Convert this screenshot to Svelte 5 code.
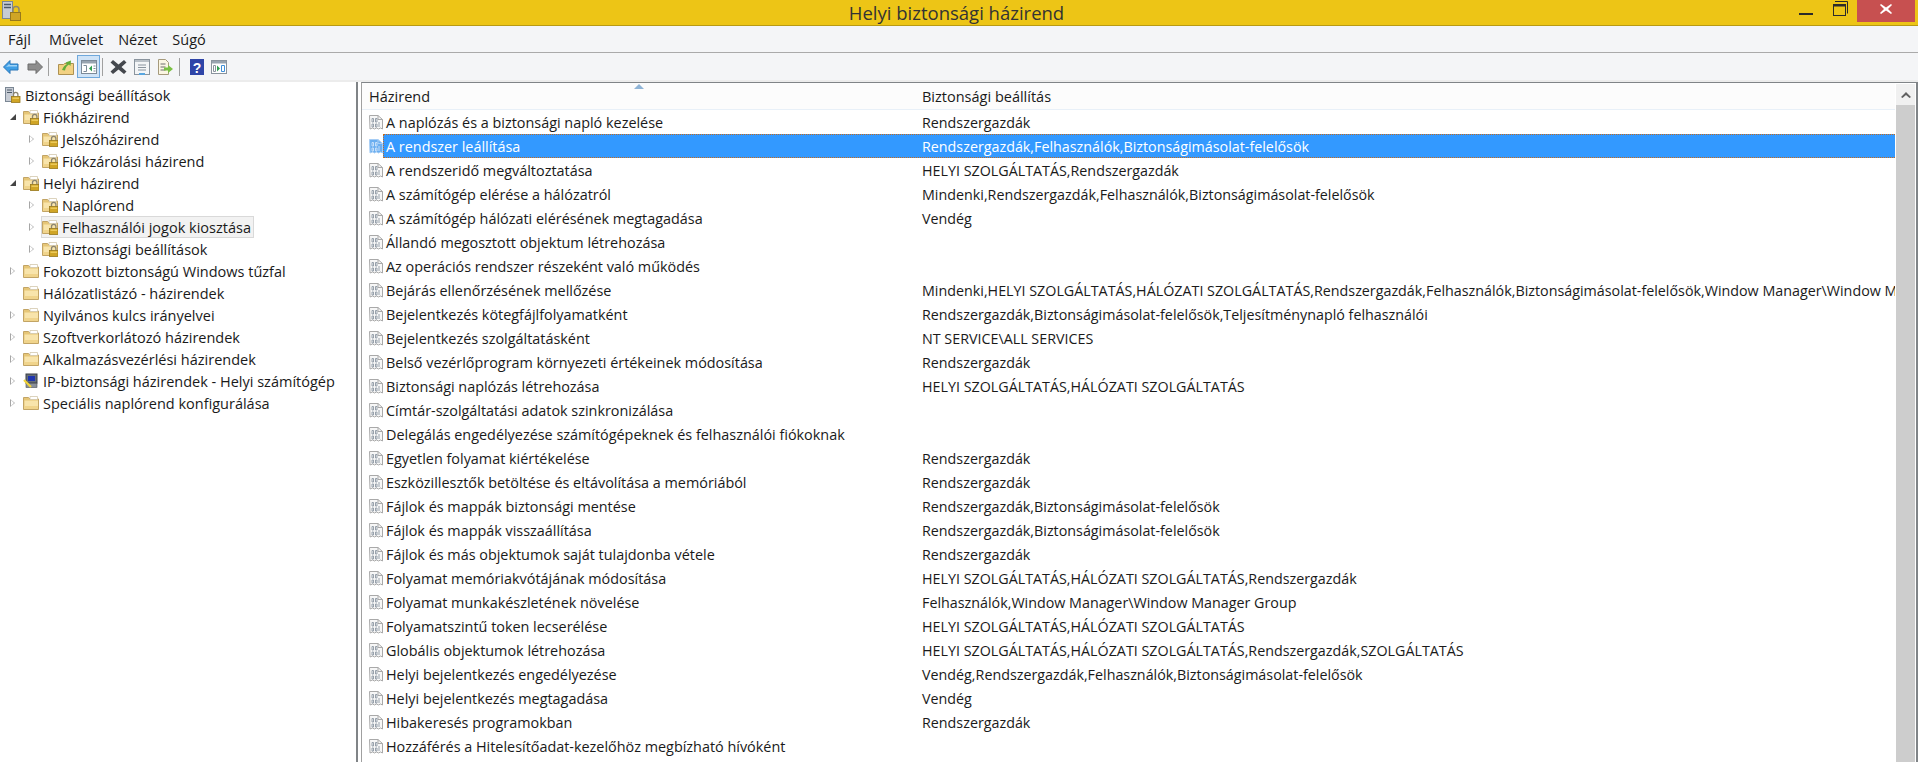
<script>
	const tree = [
		{ label: 'Biztonsági beállítások', icon: 'root', arrow: '', indent: 0 },
		{ label: 'Fiókházirend', icon: 'lock', arrow: 'open', indent: 1 },
		{ label: 'Jelszóházirend', icon: 'lock', arrow: 'closed', indent: 2 },
		{ label: 'Fiókzárolási házirend', icon: 'lock', arrow: 'closed', indent: 2 },
		{ label: 'Helyi házirend', icon: 'lock', arrow: 'open', indent: 1 },
		{ label: 'Naplórend', icon: 'lock', arrow: 'closed', indent: 2 },
		{ label: 'Felhasználói jogok kiosztása', icon: 'lock', arrow: 'closed', indent: 2, current: true },
		{ label: 'Biztonsági beállítások', icon: 'lock', arrow: 'closed', indent: 2 },
		{ label: 'Fokozott biztonságú Windows tűzfal', icon: 'folder', arrow: 'closed', indent: 1 },
		{ label: 'Hálózatlistázó - házirendek', icon: 'folder', arrow: '', indent: 1 },
		{ label: 'Nyilvános kulcs irányelvei', icon: 'folder', arrow: 'closed', indent: 1 },
		{ label: 'Szoftverkorlátozó házirendek', icon: 'folder', arrow: 'closed', indent: 1 },
		{ label: 'Alkalmazásvezérlési házirendek', icon: 'folder', arrow: 'closed', indent: 1 },
		{ label: 'IP-biztonsági házirendek - Helyi számítógép', icon: 'ip', arrow: 'closed', indent: 1 },
		{ label: 'Speciális naplórend konfigurálása', icon: 'folder', arrow: 'closed', indent: 1 }
	];

	const HSZ = 'HELYI SZOLGÁLTATÁS';
	const HAL = 'HÁLÓZATI SZOLGÁLTATÁS';
	const rows = [
		['A naplózás és a biztonsági napló kezelése', 'Rendszergazdák'],
		['A rendszer leállítása', 'Rendszergazdák,Felhasználók,Biztonságimásolat-felelősök'],
		['A rendszeridő megváltoztatása', `${HSZ},Rendszergazdák`],
		['A számítógép elérése a hálózatról', 'Mindenki,Rendszergazdák,Felhasználók,Biztonságimásolat-felelősök'],
		['A számítógép hálózati elérésének megtagadása', 'Vendég'],
		['Állandó megosztott objektum létrehozása', ''],
		['Az operációs rendszer részeként való működés', ''],
		['Bejárás ellenőrzésének mellőzése', `Mindenki,${HSZ},${HAL},Rendszergazdák,Felhasználók,Biztonságimásolat-felelősök,Window Manager\\Window Manager Group`],
		['Bejelentkezés kötegfájlfolyamatként', 'Rendszergazdák,Biztonságimásolat-felelősök,Teljesítménynapló felhasználói'],
		['Bejelentkezés szolgáltatásként', 'NT SERVICE\\ALL SERVICES'],
		['Belső vezérlőprogram környezeti értékeinek módosítása', 'Rendszergazdák'],
		['Biztonsági naplózás létrehozása', `${HSZ},${HAL}`],
		['Címtár-szolgáltatási adatok szinkronizálása', ''],
		['Delegálás engedélyezése számítógépeknek és felhasználói fiókoknak', ''],
		['Egyetlen folyamat kiértékelése', 'Rendszergazdák'],
		['Eszközillesztők betöltése és eltávolítása a memóriából', 'Rendszergazdák'],
		['Fájlok és mappák biztonsági mentése', 'Rendszergazdák,Biztonságimásolat-felelősök'],
		['Fájlok és mappák visszaállítása', 'Rendszergazdák,Biztonságimásolat-felelősök'],
		['Fájlok és más objektumok saját tulajdonba vétele', 'Rendszergazdák'],
		['Folyamat memóriakvótájának módosítása', `${HSZ},${HAL},Rendszergazdák`],
		['Folyamat munkakészletének növelése', 'Felhasználók,Window Manager\\Window Manager Group'],
		['Folyamatszintű token lecserélése', `${HSZ},${HAL}`],
		['Globális objektumok létrehozása', `${HSZ},${HAL},Rendszergazdák,SZOLGÁLTATÁS`],
		['Helyi bejelentkezés engedélyezése', 'Vendég,Rendszergazdák,Felhasználók,Biztonságimásolat-felelősök'],
		['Helyi bejelentkezés megtagadása', 'Vendég'],
		['Hibakeresés programokban', 'Rendszergazdák'],
		['Hozzáférés a Hitelesítőadat-kezelőhöz megbízható hívóként', '']
	];
</script>

{#snippet padlock(x, y)}
	<path d="M{x + 2} {y + 4}V{y + 2}a2.200 2.200 0 0 1 4.400 0v2" fill="none" stroke="#8c8672" stroke-width="1.300" />
	<rect x={x} y={y + 4} width="8.500" height="6" fill="#d0a526" stroke="#97781c" stroke-width=".8" />
	<rect x={x + 1} y={y + 5} width="6.500" height="1.500" fill="#ecca5a" />
{/snippet}

{#snippet folder(locked)}
	<svg class="ico" viewBox="0 0 16 16">
		<path d="M.5 2.500h5l1.500 1.500h8.500v10.500H.5z" fill="#e6c677" stroke="#c2a465" />
		<path d="M7 1.500h7.500v3H7z" fill="#fff" stroke="#d3c8ac" stroke-width=".8" />
		<path d="M1.500 5.500h13.500v8.500H1.500z" fill="#f8e4ab" />
		<path d="M1.500 11h13.500v3H1.500z" fill="#f0d48c" />
		{#if locked}{@render padlock(7.500, 5.500)}{/if}
	</svg>
{/snippet}

{#snippet policy(sel)}
	{@const line = sel ? '#a6cdf5' : '#a9a9a9'}
	{@const digit = sel ? '#cfe4fb' : '#8d97a3'}
	<svg class="pol" viewBox="0 0 14 15">
		<path d="M.5.500h8.500l4.500 4v9.500l-2-1-2 1-2-1-2 1-2-1-2.500 1z" fill={sel ? '#6aaef0' : '#f7f7f7'} stroke={line} />
		<path d="M9 .5v4h4.500" fill="none" stroke={line} />
		<path d="M3 3.500h1.500v3.500H3zM6.500 3.500H8v3.500H6.500zM3 9h1.500v3H3zM6.500 9H8v3H6.500zM10 7v5" fill="none" stroke={digit} stroke-width=".9" />
	</svg>
{/snippet}

<div class="win">
	<header class="title">
		<svg class="appicon" viewBox="0 0 19 22">
			<rect x=".5" y=".5" width="10" height="17" fill="#c7ccd4" stroke="#7b8794" />
			<path d="M2 3.500h7M2 6.500h7" stroke="#4d5a68" stroke-width="1.500" />
			<path d="M11 11V8.500a3 3 0 0 1 6 0V11" fill="none" stroke="#8c8672" stroke-width="1.500" />
			<rect x="8.500" y="11.500" width="10" height="8" fill="#d0a526" stroke="#97781c" />
		</svg>
		<span class="ttext">Helyi biztonsági házirend</span>
		<svg class="min" viewBox="0 0 14 2"><rect width="14" height="2" fill="#2b2b2b" /></svg>
		<svg class="max" viewBox="0 0 15 15">
			<path d="M2 .5h12.500v12" fill="none" stroke="#2b2b2b" />
			<rect x=".5" y="3.500" width="12" height="11" fill="none" stroke="#2b2b2b" />
			<rect y="3" width="13" height="2.500" fill="#2b2b2b" />
		</svg>
		<div class="close">
			<svg viewBox="0 0 12 10"><path d="M1 0l5 3.500L11 0l1 1-4 4 4 4-1 1-5-3.500L1 10 0 9l4-4-4-4z" fill="#fff" /></svg>
		</div>
	</header>

	<nav class="menu">
		<span class="first">Fájl</span><span>Művelet</span><span>Nézet</span><span>Súgó</span>
	</nav>

	<div class="toolbar">
		<svg class="tb" viewBox="0 0 16 16"><path d="M.5 8L7 1.500V5h8v6H7v3.500z" fill="#3f9fe6" stroke="#2a77b8" /><path d="M3 8l3.500-3.500V6H14v1.500H6z" fill="#9ed3f7" /></svg>
		<svg class="tb fwd" viewBox="0 0 16 16"><path d="M15.500 8L9 1.500V5H1v6h8v3.500z" fill="#8d8d8d" stroke="#6c6c6c" /></svg>
		<i class="sep s1"></i>
		<svg class="tb" viewBox="0 0 16 16">
			<path d="M.5 5.500h5l1-1h9v11H.5z" fill="#f2d183" stroke="#ad9152" />
			<path d="M4 11c1-3 3-5 5-6L7.500 3.500 13 1.500l-.5 5.500-1.500-1.500c-2 1-3.500 3-4 6z" fill="#62ad3a" />
		</svg>
		<span class="tb-on">
			<svg class="tb" viewBox="0 0 16 16">
				<rect x=".5" y="1.500" width="15" height="13" fill="#fff" stroke="#7c8a99" />
				<rect x="1" y="2" width="14" height="2.500" fill="#98a4b0" />
				<path d="M2.500 6.500h3v6h-3" fill="none" stroke="#7c8a99" />
				<path d="M11 6.500v6l-3-3z" fill="#2e9e4f" />
				<path d="M12.500 7h2M12.500 9.500h2M12.500 12h2" stroke="#7c8a99" />
			</svg>
		</span>
		<i class="sep s2"></i>
		<svg class="tb del" viewBox="0 0 16 16"><path d="M2.500 1l5.500 4.500L13.500 1 16 3.500 11 8l5 4.500-2.500 2.500L8 10.500 2.500 15 0 12.500 5 8 0 3.500z" fill="#44484e" /></svg>
		<svg class="tb" viewBox="0 0 16 16">
			<rect x=".5" y=".5" width="15" height="15" fill="#f3f5f7" stroke="#8a949e" />
			<rect x="1" y="1" width="14" height="2" fill="#b9c0c7" />
			<path d="M4 6h8M4 8.500h8M4 11h8" stroke="#8a949e" />
			<rect x="5" y="14" width="6" height="2" fill="#58a6e0" />
		</svg>
		<svg class="tb" viewBox="0 0 16 16">
			<path d="M1.500.5h7l3 3v12h-10z" fill="#fbf6e3" stroke="#a59a7c" />
			<path d="M3.500 5h5M3.500 8h5M3.500 11h5" stroke="#6c6c6c" />
			<path d="M7 8.500h4V6l5 4-5 4v-2.500H7z" fill="#7ac143" />
		</svg>
		<i class="sep s3"></i>
		<svg class="tb help" viewBox="0 0 16 16">
			<rect x="1" width="14" height="16" fill="#2f45a8" />
			<text x="8" y="13.500" class="qmark">?</text>
		</svg>
		<svg class="tb last" viewBox="0 0 16 16">
			<rect x=".5" y="1.500" width="15" height="13" fill="#fff" stroke="#8a949e" />
			<rect x="1" y="2" width="14" height="2.500" fill="#98a4b0" />
			<path d="M10.500 6.500h3v6h-3z" fill="none" stroke="#3f8fd8" />
			<path d="M2.500 6.500h2v6h-2z" fill="none" stroke="#8a949e" />
			<path d="M6 6.500v6l3-3z" fill="#2e9e4f" />
		</svg>
	</div>

	<div class="panes">
		<aside class="tree">
			{#each tree as n}
				<div class="node lv{n.indent}">
					{#if n.indent > 0}
						<span class="arrow {n.arrow}"></span>
					{/if}
					<span class="label-wrap" class:current={n.current}>
						{#if n.icon === 'root'}
							<svg class="ico" viewBox="0 0 16 16">
								<rect x=".5" y=".5" width="8" height="14" fill="#c7ccd4" stroke="#7b8794" />
								<path d="M2 3h5M2 5.500h5" stroke="#4d5a68" />
								{@render padlock(6.500, 5.500)}
							</svg>
						{:else if n.icon === 'ip'}
							<svg class="ico" viewBox="0 0 16 16">
								<rect x="3" y="1" width="11" height="9" fill="#666e78" stroke="#3a3f46" />
								<rect x="5" y="3" width="7" height="5" fill="#1f35b0" />
								<rect x="3" y="10.500" width="11" height="4" fill="#8a9099" stroke="#4a4f56" stroke-width=".6" />
								<path d="M1 7l7 7" stroke="#f2d43a" stroke-width="2.200" />
							</svg>
						{:else}
							{@render folder(n.icon === 'lock')}
						{/if}
						<span>{n.label}</span>
					</span>
				</div>
			{/each}
		</aside>

		<section class="list">
			<div class="grid">
				<div class="head">
					<span class="sort"></span>
					<div class="hc c1">Házirend</div>
					<div class="hc">Biztonsági beállítás</div>
				</div>
				{#each rows as r, i}
					<div class="row">
						{@render policy(i === 1)}
						<div class="cells" class:sel={i === 1}>
							<div class="c1">{r[0]}</div>
							<div class="c2">{r[1]}</div>
						</div>
					</div>
				{/each}
			</div>
			<div class="vscroll">
				<div class="vbtn">
					<svg viewBox="0 0 10 6"><path d="M0 5l5-5 5 5-1.500 1L5 3 1.500 6z" fill="#606060" /></svg>
				</div>
				<div class="vthumb"></div>
			</div>
		</section>
	</div>
</div>

<style>
	:global(body) { margin: 0; background: #fff; overflow: hidden; }
	.win { width: 1918px; height: 762px; display: flex; flex-direction: column; overflow: hidden; font-family: "Open Sans", "Liberation Sans", sans-serif; font-size: 14.500px; color: #1a1a1a; }

	.title { height: 25px; background: #edc516; border-bottom: 1px solid #b89a14; position: relative; display: flex; justify-content: center; align-items: center; flex: none; padding-right: 5px; }
	.appicon { position: absolute; left: 2px; top: 1px; width: 19px; height: 22px; }
	.ttext { font-size: 18.500px; color: #333; }
	.min { position: absolute; right: 105px; top: 13px; width: 14px; height: 2px; }
	.max { position: absolute; right: 70px; top: 1px; width: 15px; height: 15px; }
	.close { position: absolute; right: 3px; top: 0; width: 58px; height: 22px; background: #c75050; display: flex; justify-content: center; }
	.close svg { width: 12px; height: 10px; margin-top: 4px; }

	.menu { height: 26px; background: #f4f5f7; border-bottom: 1px solid #aaa; display: flex; align-items: center; gap: 15px; padding-left: 8px; flex: none; }
	.first { margin-right: 3px; }
	.toolbar { height: 27px; background: #f4f5f7; border-bottom: 2px solid #ececec; box-sizing: content-box; display: flex; align-items: center; gap: 7px; padding-left: 3px; flex: none; }
	.tb { width: 16px; height: 16px; flex: none; }
	.fwd { margin-left: 1px; }
	.del { width: 17px; }
	.help { margin-left: 2px; }
	.last { margin-left: -1px; }
	.tb-on { width: 23px; height: 23px; box-sizing: border-box; margin-left: -4px; background: #cfe3f7; border: 1px solid #6fa8dc; display: flex; align-items: center; justify-content: center; flex: none; }
	.sep { width: 1px; height: 18px; background: #a0a0a0; }
	.s1 { margin-left: -2px; margin-right: 2px; }
	.s2 { margin-left: -5px; }
	.s3 { margin-left: -1px; }
	.qmark { font: bold 14px "Liberation Sans", sans-serif; fill: #fff; text-anchor: middle; }

	.panes { flex: 1; display: flex; min-height: 0; }
	.tree { width: 356px; flex: none; border-right: 2px solid #808487; padding-top: 2px; }
	.node { height: 22px; display: flex; align-items: center; white-space: nowrap; }
	.lv0 { padding-left: 4px; }
	.lv1 { padding-left: 9px; }
	.lv2 { padding-left: 28px; }
	.arrow { width: 10px; height: 10px; flex: none; margin-right: 3px; position: relative; }
	.arrow.closed::before { content: ""; position: absolute; left: 1px; top: 1px; border-left: 5px solid #a6a6a6; border-top: 4px solid transparent; border-bottom: 4px solid transparent; }
	.arrow.closed::after { content: ""; position: absolute; left: 2px; top: 2px; border-left: 3px solid #fff; border-top: 3px solid transparent; border-bottom: 3px solid transparent; }
	.arrow.open::before { content: ""; position: absolute; left: 1px; top: 2px; border-right: 6px solid #444; border-top: 6px solid transparent; }
	.label-wrap { display: flex; align-items: center; height: 20px; padding-right: 2px; border: 1px solid transparent; }
	.label-wrap.current { background: #f2f2f2; border-color: #d9d9d9; }
	.ico { width: 16px; height: 16px; flex: none; margin-right: 4px; }

	.list { flex: 1; min-width: 0; margin-left: 3px; border-top: 1px solid #808487; border-left: 1px solid #a0a0a0; border-right: 2px solid #808487; display: flex; }
	.grid { flex: 1; min-width: 0; overflow: hidden; }
	.head { height: 26px; background: #fcfcfc; border-bottom: 1px solid #e8f0f8; display: flex; align-items: center; position: relative; }
	.hc { padding-left: 7px; }
	.head .c1 { width: 546px; flex: none; }
	.sort { position: absolute; left: 272px; top: 1px; border-bottom: 5px solid #8fb4d6; border-left: 5px solid transparent; border-right: 5px solid transparent; }
	.row { height: 24px; display: flex; align-items: center; white-space: nowrap; }
	.pol { width: 14px; height: 15px; flex: none; margin-left: 7px; }
	.cells { flex: 1; min-width: 0; display: flex; height: 24px; align-items: center; box-sizing: border-box; overflow: hidden; border: 1px dotted transparent; border-right: 0; }
	.cells.sel { background: #3399ff; color: #fff; border-color: #c46a1e; }
	.cells .c1 { width: 532px; flex: none; padding-left: 2px; box-sizing: border-box; font-size: 14.400px; }
	.cells .c2 { padding-left: 6px; font-size: 14.300px; }

	.vscroll { width: 19px; flex: none; margin: 1px 1px 0 1px; display: flex; flex-direction: column; background: #f0f0f0; }
	.vbtn { height: 21px; display: flex; justify-content: center; align-items: center; background: #f0f0f0; }
	.vbtn svg { width: 10px; height: 6px; }
	.vthumb { flex: 1; background: #cdcdcd; }
</style>
